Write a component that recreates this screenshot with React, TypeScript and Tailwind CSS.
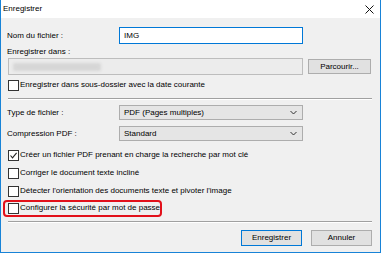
import React from "react";

function Box({ checked = false }: { checked?: boolean }) {
  return (
    <div className="w-[11px] h-[11px] border border-[#333333] bg-white flex items-center justify-center shrink-0">
      {checked && (
        <svg width="9" height="9" viewBox="0 0 9 9">
          <polyline points="1.5,4.5 3.5,6.8 7.6,1.8" fill="none" stroke="#222" strokeWidth="1.1" />
        </svg>
      )}
    </div>
  );
}

function Check({ label, checked = false }: { label: string; checked?: boolean }) {
  return (
    <div className="flex items-center h-[12px] gap-[1px]">
      <Box checked={checked} />
      <span className="leading-[12px] whitespace-nowrap">{label}</span>
    </div>
  );
}

function Sep() {
  return <div className="h-[2px] border-t border-[#a0a0a0] border-b border-b-white" />;
}

function Chevron() {
  return (
    <svg width="7" height="5" viewBox="0 0 7 5">
      <polyline points="0.5,1 3.5,4 6.5,1" fill="none" stroke="#333" strokeWidth="1" />
    </svg>
  );
}

function Select({ value }: { value: string }) {
  return (
    <div className="w-[184px] h-[15px] bg-[#e5e5e5] border border-[#adadad] flex items-center justify-between pl-[4px] pr-[5px]">
      <span className="leading-[13px]">{value}</span>
      <Chevron />
    </div>
  );
}

export default function App() {
  return (
    <div className="w-[381px] h-[253px] flex flex-col font-['Liberation_Sans',Arial,sans-serif] text-[8px] text-black border-x border-b border-[#1883d7] overflow-hidden">
      <div className="h-[18px] bg-white flex items-center justify-between pl-[2px] pr-[5px] shrink-0">
        <span className="leading-[12px]">Enregistrer</span>
        <svg width="9" height="9" viewBox="0 0 9 9" className="mr-[1px]">
          <line x1="0.5" y1="0.5" x2="8.5" y2="8.5" stroke="#111" strokeWidth="1" />
          <line x1="8.5" y1="0.5" x2="0.5" y2="8.5" stroke="#111" strokeWidth="1" />
        </svg>
      </div>
      <div className="flex-1 bg-[#f0f0f0] pl-[7px] pr-[8px] pt-[9px] flex flex-col">
        <div className="flex items-center h-[17px]">
          <span className="w-[111px] -ml-[1px] pl-0">Nom du fichier :</span>
          <div className="w-[184px] h-[17px] bg-white border border-[#0078d7] flex items-center pl-[4px] ml-[1px]">
            <span className="leading-[12px]">IMG</span>
          </div>
        </div>
        <div className="mt-[3px] h-[10px] leading-[10px] -ml-[1px]">Enregistrer dans :</div>
        <div className="mt-[1px] flex items-center h-[17px] gap-[5px]">
          <div className="w-[295px] h-[17px] bg-[#ececec] border border-[#bdbdbd] flex items-center pl-[4px]">
            <div className="w-[88px] h-[8px] bg-[#d6d6d6] blur-[1.5px] rounded-[2px]" />
          </div>
          <div className="w-[63px] h-[15px] bg-[#e1e1e1] border border-[#adadad] flex items-center justify-center">
            <span className="leading-[12px]">Parcourir...</span>
          </div>
        </div>
        <div className="mt-[4px]">
          <Check label="Enregistrer dans sous-dossier avec la date courante" />
        </div>
        <div className="mt-[7px]">
          <Sep />
        </div>
        <div className="mt-[5px] flex items-center h-[15px]">
          <span className="w-[112px] -ml-[1px]">Type de fichier :</span>
          <Select value="PDF (Pages multiples)" />
        </div>
        <div className="mt-[6px] flex items-center h-[15px]">
          <span className="w-[112px] -ml-[1px]">Compression PDF :</span>
          <Select value="Standard" />
        </div>
        <div className="mt-[8px]">
          <Check checked label="Créer un fichier PDF prenant en charge la recherche par mot clé" />
        </div>
        <div className="mt-[6px]">
          <Check label="Corriger le document texte incliné" />
        </div>
        <div className="mt-[6px]">
          <Check label="Détecter l'orientation des documents texte et pivoter l'image" />
        </div>
        <div className="mt-[5px] relative">
          <Check label="Configurer la sécurité par mot de passe" />
          <div className="absolute left-[-5px] top-[-2px] w-[159px] h-[17px] border-2 border-[#e2101a] rounded-[4px]" />
        </div>
        <div className="mt-[7px]">
          <Sep />
        </div>
        <div className="mt-[7px] flex justify-end gap-[9px] pr-[0px]">
          <div className="w-[61px] h-[16px] bg-[#e1e1e1] border border-[#0078d7] flex items-center justify-center">
            <span className="leading-[12px]">Enregistrer</span>
          </div>
          <div className="w-[61px] h-[16px] bg-[#e1e1e1] border border-[#adadad] flex items-center justify-center">
            <span className="leading-[12px]">Annuler</span>
          </div>
        </div>
      </div>
    </div>
  );
}
